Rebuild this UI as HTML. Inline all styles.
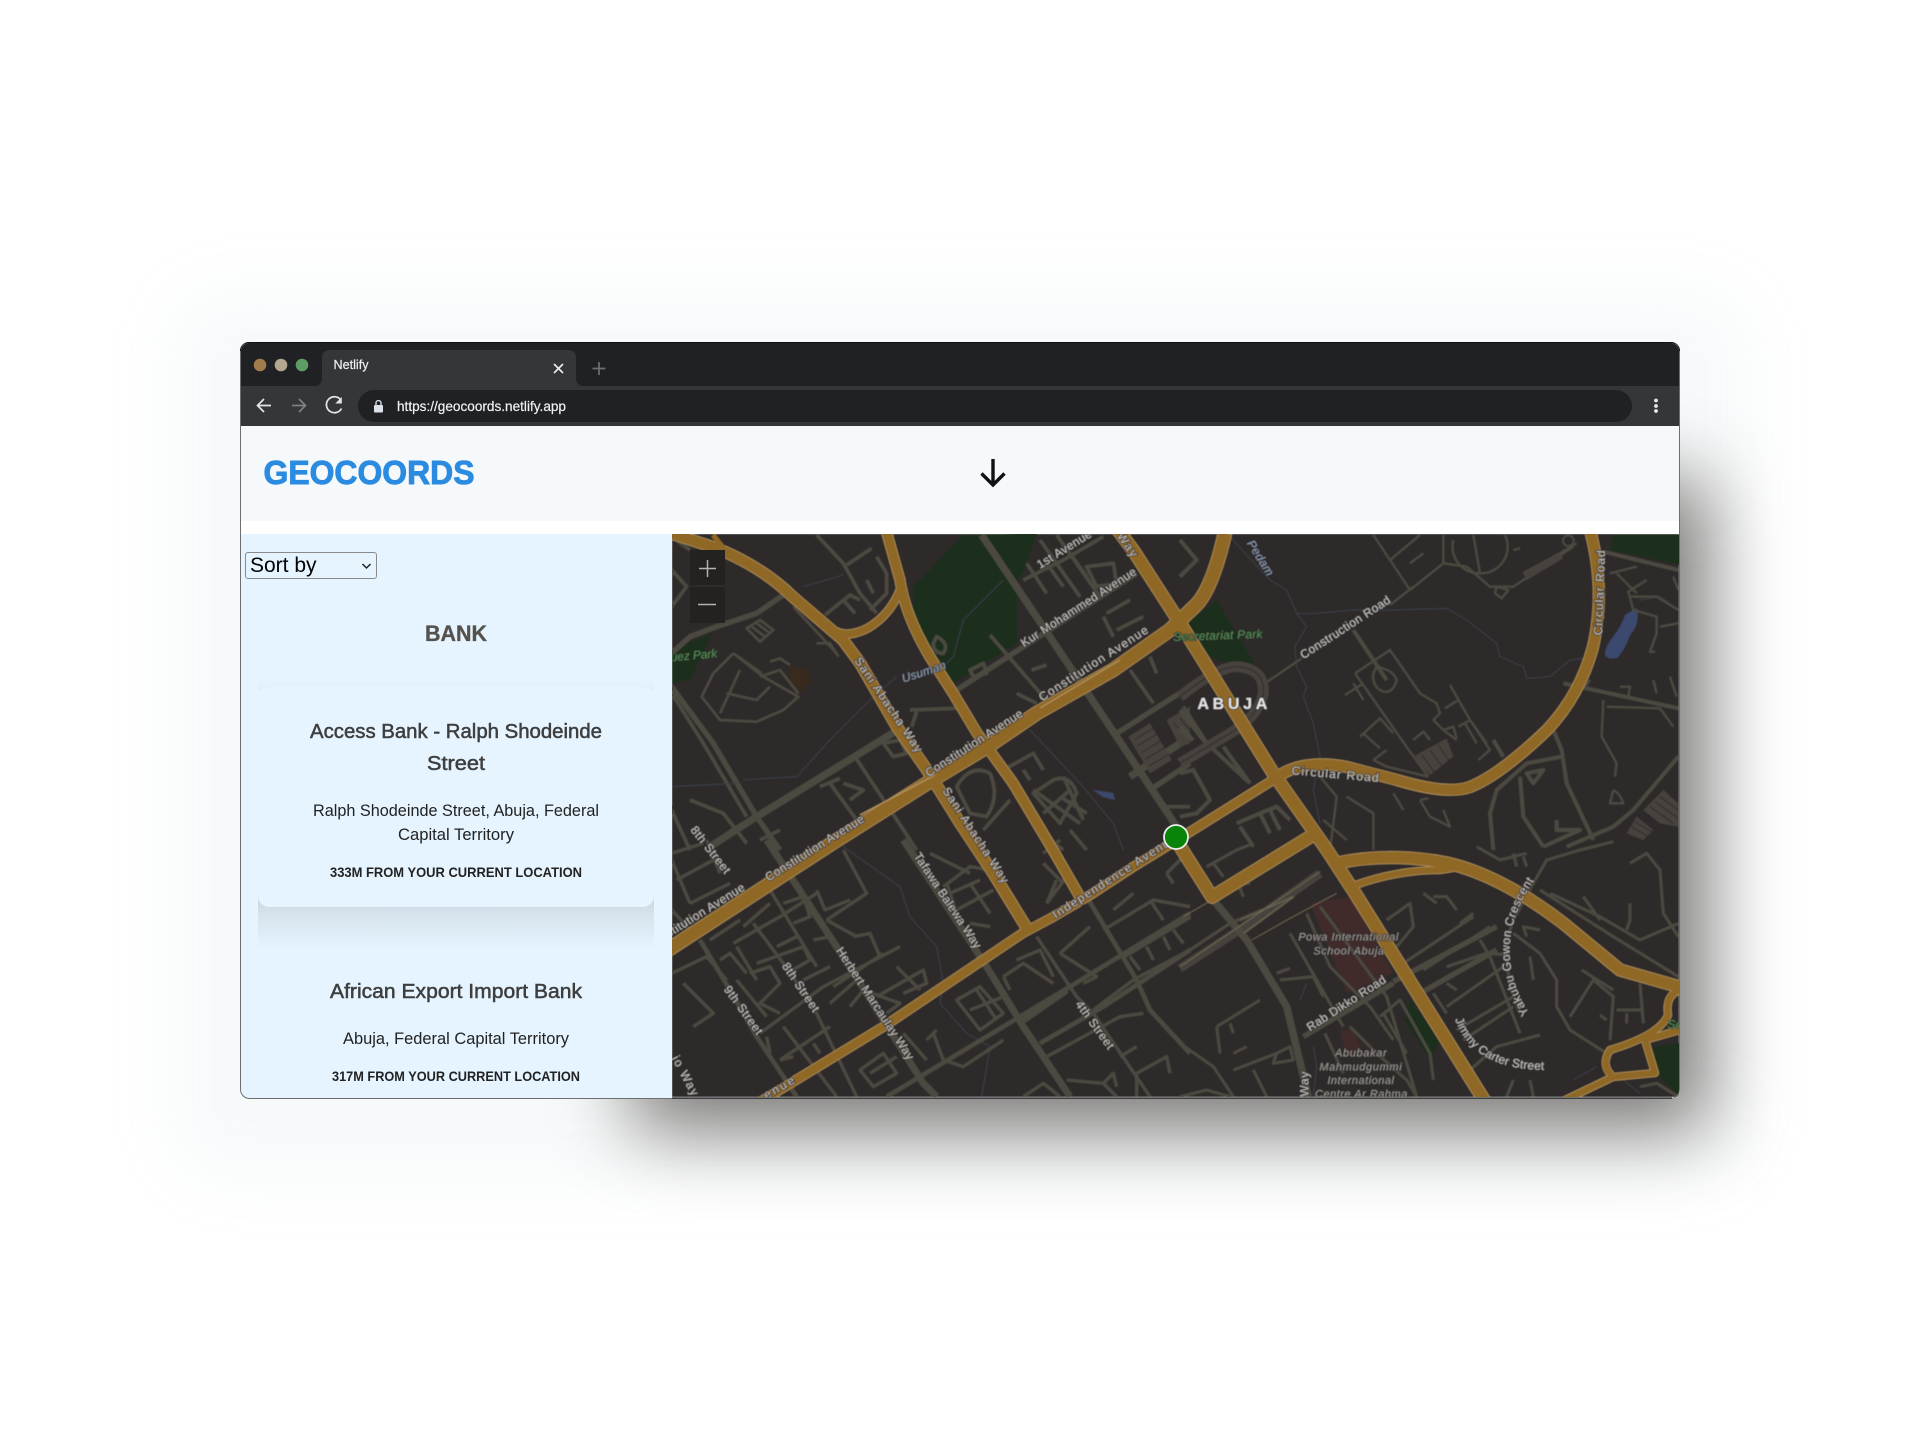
<!DOCTYPE html>
<html lang="en"><head><meta charset="utf-8"><title>Geocoords</title>
<style>
html,body{margin:0;padding:0;width:1920px;height:1440px;background:#fff;overflow:hidden;font-family:"Liberation Sans",sans-serif}
.sh{position:absolute}
svg{position:absolute;left:0;top:0}
select{position:absolute;left:245px;top:552px;width:132px;height:27px;font:21px "Liberation Sans",sans-serif;color:#000;background:#e5f4ff;border:1px solid #8a8a8a;border-radius:3px;padding:0 0 0 4px;margin:0;appearance:none;-webkit-appearance:none;outline:none}
.minor{fill:none;stroke:#4b4841;stroke-linecap:butt;stroke-linejoin:round}
.lb{font-family:"Liberation Sans",sans-serif;fill:#c4c2be;stroke:#2e2a29;stroke-width:5;paint-order:stroke;font-size:36px}
.it{font-style:italic;fill:#9a9793;stroke-width:4;font-size:33px}
.gr{font-style:italic;fill:#4f8f55;stroke-width:4}
.bl{font-style:italic;fill:#8c9db5;stroke-width:4}
</style></head><body>
<div class="sh" style="left:170px;top:290px;width:1580px;height:890px;border-radius:60px;background:rgba(150,185,210,.08);filter:blur(30px)"></div>
<div class="sh" style="left:632px;top:480px;width:1075px;height:650px;background:rgba(40,33,26,.6);filter:blur(38px)"></div>

<svg width="1920" height="1440" viewBox="0 0 1920 1440" xmlns="http://www.w3.org/2000/svg">
<defs>
<clipPath id="win"><rect x="240" y="342" width="1440" height="757" rx="9"/></clipPath>
<clipPath id="mapc"><rect x="672" y="534" width="1007" height="563"/></clipPath>
<path id="j1" d="M1047 520 Q925 322 1060 125"/>
<path id="j2" d="M825 538 Q880 690 1098 690"/>
<filter id="soft" x="0" y="0" width="100%" height="100%"><feGaussianBlur stdDeviation=".45"/></filter>
</defs>

<g clip-path="url(#win)">
<rect x="240" y="342" width="1440" height="757" fill="#f5f9fc"/>
<rect x="240" y="342" width="1440" height="44" fill="#202124"/>
<rect x="240" y="386" width="1440" height="40" fill="#35363a"/>
<rect x="240" y="426" width="1440" height="95" fill="#f5f9fc"/>
<rect x="240" y="521" width="1440" height="13" fill="#fff"/>
<rect x="240" y="534" width="432" height="565" fill="#e5f4ff"/>

<!-- Tab -->
<path d="M314 386 Q322 386 322 378 V358 Q322 350 330 350 H568 Q576 350 576 358 V378 Q576 386 584 386 Z" fill="#35363a"/>
<circle cx="260" cy="365" r="6.3" fill="#a07c4c"/>
<circle cx="281" cy="365" r="6.3" fill="#b3a78e"/>
<circle cx="302" cy="365" r="6.3" fill="#5d9c62"/>
<text x="333.5" y="369" font-size="13" fill="#f0f1f3" stroke="#f0f1f3" stroke-width=".2" textLength="35" lengthAdjust="spacingAndGlyphs">Netlify</text>
<path d="M554 364 L563 373 M563 364 L554 373" stroke="#eceded" stroke-width="1.6" fill="none"/>
<path d="M592.500 368.500 H605.500 M599 362 V375" stroke="#6f7072" stroke-width="1.7" fill="none"/>

<!-- Toolbar -->
<path d="M271 405.500 H258 M264 399 L257.500 405.500 L264 412" stroke="#e3e5e8" stroke-width="1.7" fill="none"/>
<path d="M292 405.500 H305 M299 399 L305.500 405.500 L299 412" stroke="#7f8082" stroke-width="1.7" fill="none"/>
<path d="M340.500 399.500 A8 8 0 1 0 341.500 408.500" stroke="#e3e5e8" stroke-width="1.7" fill="none"/>
<path d="M341.800 397 V403.500 H335.300 Z" fill="#e3e5e8"/>
<rect x="358" y="390" width="1274" height="32" rx="16" fill="#202124"/>
<rect x="374" y="405" width="9" height="7.500" rx="1" fill="#dde3ec"/>
<path d="M376 405.500 V403 A2.500 2.500 0 0 1 381 403 V405.500" stroke="#dde3ec" stroke-width="1.300" fill="none"/>
<text x="397" y="411" font-size="14" fill="#f0f1f3" stroke="#f0f1f3" stroke-width=".2" textLength="169" lengthAdjust="spacingAndGlyphs">https://geocoords.netlify.app</text>
<circle cx="1656" cy="400.500" r="1.900" fill="#e8eaed"/><circle cx="1656" cy="406" r="1.900" fill="#e8eaed"/><circle cx="1656" cy="411" r="1.900" fill="#e8eaed"/>

<!-- Header -->
<text x="263.500" y="484" font-size="33" font-weight="700" fill="#2b8be0" stroke="#2b8be0" stroke-width=".9" textLength="211" lengthAdjust="spacingAndGlyphs">GEOCOORDS</text>
<path d="M993 459 V485 M981.500 473.500 L993 485 L1004.500 473.500" stroke="#111" stroke-width="3.400" fill="none"/>

<!-- Sidebar cards -->
<defs><linearGradient id="cs" x1="0" y1="0" x2="0" y2="1"><stop offset="0" stop-color="#c8d5e0"/><stop offset=".35" stop-color="#d6e3ed"/><stop offset="1" stop-color="#e5f4ff"/></linearGradient>
<linearGradient id="ct" x1="0" y1="0" x2="0" y2="1"><stop offset="0" stop-color="#e5f4ff"/><stop offset="1" stop-color="#e0eff9"/></linearGradient></defs>
<rect x="258" y="678" width="396" height="12" fill="url(#ct)"/>
<rect x="258" y="895" width="396" height="55" fill="url(#cs)"/>
<rect x="258" y="687" width="396" height="220" rx="11" fill="#e5f4ff"/>

<text x="425" y="641" font-size="22" font-weight="700" fill="#55524e" stroke="#55524e" stroke-width=".3" textLength="62" lengthAdjust="spacingAndGlyphs">BANK</text>
<g font-size="20" fill="#3e3e3e" stroke="#3e3e3e" stroke-width=".5">
<text x="310" y="738" textLength="292" lengthAdjust="spacingAndGlyphs">Access Bank - Ralph Shodeinde</text>
<text x="427" y="770" textLength="58" lengthAdjust="spacingAndGlyphs">Street</text>
<text x="330" y="998" textLength="252" lengthAdjust="spacingAndGlyphs">African Export Import Bank</text>
</g>
<g font-size="17" fill="#222">
<text x="313" y="816" textLength="286" lengthAdjust="spacingAndGlyphs">Ralph Shodeinde Street, Abuja, Federal</text>
<text x="398" y="840" textLength="116" lengthAdjust="spacingAndGlyphs">Capital Territory</text>
<text x="343" y="1044" textLength="226" lengthAdjust="spacingAndGlyphs">Abuja, Federal Capital Territory</text>
</g>
<g font-size="14" font-weight="700" fill="#222">
<text x="330" y="877" textLength="252" lengthAdjust="spacingAndGlyphs">333M FROM YOUR CURRENT LOCATION</text>
<text x="332" y="1081" textLength="248" lengthAdjust="spacingAndGlyphs">317M FROM YOUR CURRENT LOCATION</text>
</g>

<!-- MAP -->
<g clip-path="url(#mapc)">
<g filter="url(#soft)">
<rect x="672" y="534" width="1007" height="563" fill="#2e2a29"/>
<!-- areas -->
<g fill="#1f2f1e">
<path d="M913 587 L963 535 L1037 533 L1023 573 L1017 580 L1017 643 L953 683 L930 657 L913 627Z"/>
<path d="M1187 623 L1217 600 L1260 673 L1223 662 L1195 650Z"/>
<path d="M672 683 L672 650 L713 633 L690 680Z"/>
<path d="M1613 535 L1680 535 L1680 565 L1610 550Z"/>
<path d="M1653 1047 L1680 1043 L1680 1097 L1657 1073Z"/>
<path d="M1410 1000 L1440 1040 L1430 1060 L1405 1020Z"/>
</g>
<g fill="#40292c">
<path d="M1310 903 L1350 897 L1393 973 L1347 993Z"/>
<path d="M1340 1030 L1353 1030 L1365 1056 L1345 1056Z"/>
</g>
<path d="M790 665 L806 670 L812 682 L800 692 L790 680Z" fill="#372b1b"/>
<g fill="#3b4a6e">
<path d="M1637 608 Q1640 625 1630 635 Q1625 650 1617 658 Q1605 660 1605 653 Q1606 645 1613 637 Q1622 625 1625 615Z"/>
<path d="M1093 790 L1113 793 L1115 800 L1103 797Z"/>
</g>

<!-- Crop 5 minors -->
<g transform="translate(670,530) scale(.33333)" class="minor">
<g stroke-width="11">
<path d="M440 15 L520 100 L570 190 L620 250M530 105 L605 55M620 80 L650 130 L650 190 L600 240M590 150 L610 190M465 255 L540 195 L570 210M520 210 L555 250M5 20 L60 60M5 120 L50 170 L5 230M5 490 L100 640 L230 860M1060 150 L1180 90 L1300 20M1070 100 L1130 190M1110 30 L1230 200M1160 15 L1290 200M1250 110 L1330 100 L1340 160 L1280 170ZM1300 260 L1330 320M960 315 L1120 500M1085 420 L1130 405M1040 490 L1100 520M1440 380 L1460 430M1380 420 L1450 520M1480 830 L1560 830M860 770 Q900 700 960 730 Q990 800 950 860 L900 850ZM1000 720 L1090 670 L1120 720M1060 720 L1080 750M940 900 L1020 810M1180 740 L1240 870M1150 750 Q1200 730 1220 790 L1170 880 L1090 790ZM1090 780 L1230 880M720 540 L860 535M740 545 L725 590M640 640 L690 630 L710 670 L670 680ZM555 680 L740 960M450 770 L510 745M520 760 L580 780 L540 810M480 760 L560 870M60 810 L160 850 L230 940M0 830 L60 960M330 900 L270 930M800 320 Q840 340 820 370 Q790 370 790 340Z M900 420 L940 400 L950 430 L910 440ZM1130 100 L1180 170M1200 70 L1250 140M1310 250 L1380 210M1340 300 L1420 260M1100 900 L1180 960M1200 900 L1250 960M1170 800 L1250 850M1120 850 L1200 780"/>
</g>
<path stroke-width="8" d="M190 370 L280 440 L385 500 L340 540 L260 575 L150 570 L95 500 L130 430 L190 370M210 420 L150 550M170 490 L260 510 L300 470M205 380 L275 430M300 395 L330 385 L360 405M270 440 L330 420 L385 490M230 295 L270 270 L310 300 L270 335ZM370 230 L500 370M440 340 L480 340 L505 380M245 290 L285 320M260 280 L300 310"/>
<path stroke-width="16" d="M340 195 L260 250 L140 290 L60 320 L5 370M5 470 L130 640 L260 860 L330 960M860 480 L1400 130M1340 610 L1560 470M1440 780 L1560 700"/>
<path stroke-width="22" d="M700 590 L260 860 L120 950M935 15 L1260 500 L1520 890M1380 740 L1560 620"/>
<g fill="#46433d" stroke="none"><path d="M1375 620 L1440 580 L1505 690 L1440 730Z M1490 570 L1560 530 L1560 640 L1530 650Z"/></g>
<path stroke="#2e2a29" stroke-width="3" d="M1392 630 L1450 595M1402 648 L1462 612M1414 668 L1474 632M1426 688 L1486 652M1438 708 L1498 672M1510 580 L1560 620M1530 565 L1560 600"/>
<path stroke="#3b4048" stroke-width="3" d="M400 170 L520 135M680 440 L600 510 L480 630 L380 740 L220 750 M1000 150 L880 270 L850 380 L830 400 M1080 600 L1230 760 L1330 880 L1360 960M5 770 L200 760"/>
</g>

<!-- Crop 6 minors -->
<g transform="translate(1180,530) scale(.33333)" class="minor">
<path stroke="#3b4048" stroke-width="3" d="M150 20 L270 150 L320 180 L350 250 L410 250 L520 240 L640 240 L800 235 L860 270 L950 340 L960 380 L1030 410 L1040 445 L1110 440 L1170 390 L1210 385M350 250 L380 290 L345 350 L350 410 L380 470 L370 500 L400 580 L420 680 L400 780 L420 880M1380 210 L1440 200 L1495 240"/>
<path stroke-width="7" d="M580 15 L690 180M630 90 L720 15M690 100 L730 70M790 15 L790 100 L690 180M820 30 A80 80 0 0 0 900 130 A80 80 0 0 0 975 15M880 15 L900 130M790 100 L860 110 L930 170 L1000 170 L1180 50M1030 130 L1140 70 L1190 40M950 170 L985 180 L965 205 L945 190ZM1000 60 L1020 55M255 460 L365 385M630 225 L700 170M525 430 L630 360 L720 490 L770 520 L780 550 L760 570 L790 600 L830 630M525 430 L690 665 L745 740M590 410 Q640 420 650 450 Q640 490 610 485 Q575 470 580 430ZM495 495 L550 460M520 460 L550 510M810 465 L870 570 L930 660 L895 690M795 535 L835 510M835 590 L870 570 L920 640M855 580 L890 640M540 620 L600 565 L640 610M550 610 L600 655M580 690 L620 660M580 690 L620 710 L745 740M700 630 L730 605 L750 630M790 600 L820 590 L830 625M420 740 L470 800 L450 960M430 870 L500 930M500 800 L580 850 L580 960M640 790 L670 840M720 810 L750 860 L810 890 L790 840M720 810 L745 805M1270 510 L1265 620 L1310 700 L1305 740M1210 480 L1230 450M1320 470 L1350 470 L1345 500M1420 450 L1430 490M1470 440 L1490 500M1280 530 L1440 535 L1480 590M1290 130 L1370 110M1310 130 L1370 190M1400 150 L1345 185 L1360 240 L1430 260 L1430 310 L1410 365 L1425 365M1350 200 L1430 200 L1495 240M1440 290 L1495 280M1480 140 L1495 180M1300 780 L1290 820 L1330 820 Q1320 790 1300 780"/>
<circle cx="1165" cy="32" r="16" stroke-width="6"/>
<path stroke-width="12" d="M520 300 L620 450M940 630 L970 680M1150 460 L1495 535M1270 65 L1495 120M1120 600 L1145 660 L1160 760 L1240 930M1145 680 L1040 700 L950 780 L930 850 L940 960M1020 740 L1030 860 L1090 950M1040 730 L1090 720 L1060 760ZM1090 950 L1200 900 L1130 900 L1130 870M1160 950 L1300 890 L1360 840 L1495 680M0 30 L50 90 L0 140M0 540 L70 630 L210 760M130 650 L210 760M10 530 L80 640M0 590 L30 620M0 730 L40 720 L90 810 L50 850 L0 860M0 600 L40 630M170 880 L240 850 L290 830 L330 870M180 890 L220 950M240 850 L270 910M270 840 L300 900"/>
<path stroke-width="32" stroke="#46433d" d="M0 500 Q100 420 160 410 Q255 410 250 490 Q235 560 150 610 L0 700"/>
<path stroke-width="3" stroke="#2e2a29" d="M0 500 Q100 420 160 410 Q255 410 250 490 Q235 560 150 610 L0 700"/>
<path fill="#46433d" stroke="none" d="M1390 840 L1450 780 L1495 820 L1495 890 L1440 880Z M1340 910 L1370 860 L1420 900 L1390 930Z M700 680 L800 625 L820 680 L750 735Z M1030 130 L1140 70 L1150 85 L1040 150Z"/>
<path stroke="#2e2a29" stroke-width="3" d="M1410 830 L1480 880M1425 815 L1495 865M1440 800 L1495 840M1355 890 L1405 920M1365 875 L1415 905M725 675 L770 735M750 660 L790 715M775 645 L810 695"/>
</g>

<!-- Crop 7 minors -->
<g transform="translate(670,840) scale(.33333)" class="minor">
<path stroke="#3b4048" stroke-width="3" d="M520 20 L690 140 L720 230 L800 320 L820 430 L810 490 L890 580 L960 620 L935 770"/>
<path stroke-width="10" d="M190 310 L330 230 L440 160M200 320 L260 420M250 250 L340 370 L430 500 L560 770M300 150 L440 380M150 360 L180 340 L230 400M240 400 L300 380 L330 430 L270 490 L330 520M260 370 L400 320 L420 360 L350 400M340 190 L400 170 L420 230 L370 250M430 300 L480 290M560 290 L470 240M470 240 L590 160 L520 30M440 150 L465 210 L540 180M550 290 L600 280 L630 350M680 380 L750 450M620 470 L760 390 L770 430 L700 460M540 500 L580 450 L690 490 L650 520M340 560 L500 770M330 660 L480 560M290 590 L300 640M430 610 L450 640M330 660 L370 650M570 690 L640 640 L680 700 L610 740ZM600 700 L680 650M700 580 L770 660M770 600 L800 570M790 580 L820 660 L880 680 L1000 600M780 40 L900 100M820 140 L900 80 L960 90M830 130 L860 220M840 160 L930 120M860 210 L970 150M900 250 L960 260M900 130 L960 220M860 480 L930 440 L1000 520 L930 570ZM920 450 L980 540M900 510 L1000 470M1000 410 L1060 370 L1150 430M1040 360 L1110 330 L1150 410M1020 450 L1000 410M1170 340 L1260 260M1170 340 L1280 410 L1240 430M1130 650 L1350 530 L1420 520M1350 650 L1400 620M1300 270 L1450 180 L1560 200M1330 210 L1390 160M1380 350 L1410 390M1430 320 L1450 360M1480 290 L1500 330M1510 270 L1540 310M1440 180 L1480 240M1130 190 L1190 110M1160 120 L1130 190M1180 130 L1120 70M1120 40 L1170 0M1490 100 L1540 50M1490 100 L1510 130M1400 770 L1400 700 L1490 650 L1500 700M1190 720 L1300 730 L1340 770M1060 770 L1120 730 L1170 770M1300 730 L1330 700 L1340 740M5 400 L110 350 L170 420M40 430 L130 520 L70 560M5 210 L70 280M110 0 L150 100M5 40 L100 10M5 60 L60 190M270 580 L460 440 L690 320M490 440 L640 340M20 120 L130 60M60 190 L180 130M220 260 L300 190M320 320 L380 290M400 420 L480 380M480 490 L560 420M200 420 L290 530M120 300 L210 240"/>
<path stroke-width="14" d="M90 300 L180 450 L260 590 L380 770M650 770 L1200 440 L1560 220M1110 610 L1300 500 L1560 330M1250 170 L1400 420 L1440 510 L1560 640M1360 350 L1560 230"/>
<path stroke-width="10" d="M1100 290 L1220 470 L1270 520 L1440 770M1270 510 L1390 420 L1560 330"/>
<path stroke-width="21" d="M290 0 L500 320 L760 730 L800 770M700 0 L950 380 L1060 560 L1200 770M1060 540 L1190 450"/>
</g>

<!-- Crop 8 minors -->
<g transform="translate(1180,840) scale(.33333)" class="minor">
<path stroke="#3b4048" stroke-width="3" d="M360 480 L380 430 M400 620 L410 680 L400 770M1180 720 L1250 680M1330 720 L1380 760"/>
<path stroke-width="26" stroke="#46433d" d="M0 385 L170 275 L420 100"/>
<path stroke-width="9" d="M0 350 L150 250 L340 170M180 240 L340 170 L190 280M80 80 L170 30 L220 10M100 70 L130 110M140 130 L210 130M170 120 L190 170M420 200 L620 470 L710 770M380 220 L450 380 L570 500 L640 600M330 280 L450 490 L490 560M300 420 L400 410 L430 470M290 400 L330 385M620 240 L690 190 L700 260 L650 320M670 370 L880 230M830 210 L800 170 L760 170M840 250 L880 220M730 390 L930 260M900 300 L930 350 L1020 580M800 380 L920 340 L990 345M800 500 L970 380M830 570 L1000 470M850 600 L1000 500M760 460 L800 520M800 430 L830 450M600 530 L660 480 L750 640 L760 720M870 690 L950 620 L1080 585M1060 130 L1000 240 L975 320 L990 440 L1020 520M1000 280 L1080 340 L1130 420 L1130 500 L1170 570 L1280 640M1040 290 L1030 260 L1080 270M1050 350 L1060 420M1170 530 L1240 420 L1300 470 L1290 600M1205 390 L1300 450M1260 525 L1280 540M1310 510 L1390 510M1340 520 L1340 550M1380 430 L1390 550M1110 160 L1260 230 L1380 300 L1495 250M1210 170 L1260 240M1350 190 L1350 240 L1340 270M1350 70 L1400 40 L1440 90 L1450 220 L1495 290M1060 130 L1100 60 L1200 30 L1300 5M1080 150 L1300 290 L1495 410M0 610 L100 680 L160 770M110 560 L240 480M110 560 L120 640M150 550 L160 580M160 640 L200 620M290 640 L330 620 L340 660 L280 670ZM160 690 L290 640M220 690 L260 770M0 770 L80 750 L150 770M510 560 L590 640 L680 720 L710 770M610 520 L680 640M435 580 L490 700M1000 720 L980 770M1050 720 L1060 770M1380 740 L1430 730 L1495 770M890 20 L960 60 L1040 40M1000 40 L1010 80M1030 50 L1040 80M730 160 L770 190"/>
<path stroke-width="16" d="M370 590 L640 430M720 460 L950 330M640 425 L950 260"/>
<path stroke-width="22" d="M100 180 L200 300 L320 500 L385 770"/>
<path stroke-width="2" stroke="#7d7358" d="M180 240 L340 170M190 280 L340 170M215 300 L330 235 L470 160M10 230 L130 160M0 380 L170 265 L420 95"/>
</g>

<!-- major casing + fill -->
<g fill="none" stroke-linejoin="round" stroke-linecap="butt">
<g stroke="#b2945f">
<path stroke-width="12" d="M660 530 L713 547 Q760 565 793 597 L843 640 L860 663 L897 727 L927 770 L960 823 L993 873 L1028 930"/>
<path stroke-width="11" d="M886 530 L900 580 Q905 615 930 657 L953 693 L977 733 L1013 783 L1053 850 L1080 897"/>
<path stroke-width="9" d="M900 590 Q890 615 868 628 Q845 640 830 628"/>
<path stroke-width="14.500" d="M660 955 L837 840 L937 777 L987 747 L1037 713 L1113 670 L1170 630 L1195 606 Q1212 590 1225 533"/>
<path stroke-width="10" d="M755 1105 L883 1027 L1023 933 L1053 917 L1087 897 L1133 867 L1177 840 L1273 780"/>
<path stroke-width="12" d="M1273 780 Q1300 758 1347 767 L1397 780 Q1447 795 1470 787 Q1500 775 1547 730 Q1580 695 1593 647 Q1606 590 1590 530"/>
<path stroke-width="13.500" d="M1118 530 L1133 550 L1180 623 L1273 773 L1327 850 L1353 890 L1484 1100"/>
<path stroke-width="13.500" d="M1176 840 L1212 897 L1313 835"/>
<path stroke-width="13" d="M1337 863 Q1390 852 1447 863 Q1500 875 1563 923 L1620 970 L1680 987"/>
<path stroke-width="8" d="M1350 887 Q1395 870 1440 870 L1453 868"/>
<path stroke-width="8" d="M1680 990 Q1665 995 1668 1015 Q1660 1035 1610 1050 Q1600 1065 1613 1077 L1565 1100M1645 1040 L1655 1073 L1613 1077M1680 1030 L1645 1040"/>
</g>
<g stroke="#8f6727">
<path stroke-width="10.500" d="M660 530 L713 547 Q760 565 793 597 L843 640 L860 663 L897 727 L927 770 L960 823 L993 873 L1028 930"/>
<path stroke-width="9.500" d="M886 530 L900 580 Q905 615 930 657 L953 693 L977 733 L1013 783 L1053 850 L1080 897"/>
<path stroke-width="7.500" d="M900 590 Q890 615 868 628 Q845 640 830 628"/>
<path stroke-width="13" d="M660 955 L837 840 L937 777 L987 747 L1037 713 L1113 670 L1170 630 L1195 606 Q1212 590 1225 533"/>
<path stroke-width="8.500" d="M755 1105 L883 1027 L1023 933 L1053 917 L1087 897 L1133 867 L1177 840 L1273 780"/>
<path stroke-width="10.500" d="M1273 780 Q1300 758 1347 767 L1397 780 Q1447 795 1470 787 Q1500 775 1547 730 Q1580 695 1593 647 Q1606 590 1590 530"/>
<path stroke-width="12" d="M1118 530 L1133 550 L1180 623 L1273 773 L1327 850 L1353 890 L1484 1100"/>
<path stroke-width="12" d="M1176 840 L1212 897 L1313 835"/>
<path stroke-width="11.500" d="M1337 863 Q1390 852 1447 863 Q1500 875 1563 923 L1620 970 L1680 987"/>
<path stroke-width="6.500" d="M1350 887 Q1395 870 1440 870 L1453 868"/>
<path stroke-width="6.500" d="M1680 990 Q1665 995 1668 1015 Q1660 1035 1610 1050 Q1600 1065 1613 1077 L1565 1100M1645 1040 L1655 1073 L1613 1077M1680 1030 L1645 1040"/>
<path stroke-width="5" d="M713 535 L725 550"/>
</g>
<path stroke="#b2945f" stroke-width="1.300" d="M860 815 L935 775M1040 708 L1120 660"/>
</g>

<!-- labels crop 5 -->
<g transform="translate(670,530) scale(.33333)">
<text class="lb" transform="translate(552,392) rotate(56)" textLength="335">Sani Abacha Way</text>
<text class="lb bl" transform="translate(700,458) rotate(-18)" textLength="137">Usuman</text>
<text class="lb" transform="translate(1062,352) rotate(-33)" textLength="405">Kur Mohammed Avenue</text>
<text class="lb" transform="translate(1110,117) rotate(-32)" textLength="186">1st Avenue</text>
<text class="lb" transform="translate(776,742) rotate(-33)" textLength="340">Constitution Avenue</text>
<text class="lb" transform="translate(1116,515) rotate(-33)" textLength="383">Constitution Avenue</text>
<text class="lb" transform="translate(816,782) rotate(57)" textLength="334">Sani Abacha Way</text>
<text class="lb" transform="translate(1340,18) rotate(55)" textLength="80">Way</text>
<text class="lb gr" transform="translate(3,394) rotate(-5)" textLength="140">uez Park</text>
<text class="lb" transform="translate(60,900) rotate(52)" textLength="170">8th Street</text>
<text class="lb" transform="translate(295,1055) rotate(-32)" textLength="342">Constitution Avenue</text>
</g>
<!-- labels crop 6 -->
<g transform="translate(1180,530) scale(.33333)">
<text class="lb bl" transform="translate(200,40) rotate(58)" textLength="118">Pedam</text>
<text class="lb gr" transform="translate(-20,333) rotate(-2)" textLength="268">Secretariat Park</text>
<text class="lb" transform="translate(370,388) rotate(-33)" textLength="315">Construction Road</text>
<text class="lb" x="52" y="537" textLength="210" style="font-size:48px;font-weight:700;fill:#e6e6e6">ABUJA</text>
<text class="lb" transform="translate(334,733) rotate(5)" textLength="262">Circular Road</text>
<text class="lb" transform="translate(1266,316) rotate(-88)" textLength="255">Circular Road</text>
</g>
<!-- labels crop 7 -->
<g transform="translate(670,840) scale(.33333)">
<text class="lb" transform="translate(730,48) rotate(56.500)" textLength="336">Tafawa Balewa Way</text>
<text class="lb" transform="translate(497,332) rotate(56.700)" textLength="395">Herbert Marcaulay Way</text>
<text class="lb" transform="translate(335,378) rotate(56)" textLength="170">8th Street</text>
<text class="lb" transform="translate(160,448) rotate(54)" textLength="172">9th Street</text>
<text class="lb" transform="translate(1215,493) rotate(54)" textLength="170">4th Street</text>
<text class="lb" transform="translate(1157,237) rotate(-32.800)" textLength="434">Independence Avenue</text>
<text class="lb" transform="translate(290,778) rotate(-30)" textLength="100">enue</text>
<text class="lb" transform="translate(5,655) rotate(62)" textLength="130">jo Way</text>
<text class="lb" transform="translate(-63,330) rotate(-32)" textLength="342">Constitution Avenue</text>
</g>
<!-- labels crop 8 -->
<g transform="translate(1180,840) scale(.33333)">
<text class="lb it" x="355" y="302" textLength="300">Powa International</text>
<text class="lb it" x="400" y="343" textLength="212">School Abuja</text>
<text class="lb" transform="translate(390,575) rotate(-33)" textLength="275">Rab Dikko Road</text>
<text class="lb"><textPath href="#j1" textLength="425">Yakubu Gowon Crescent</textPath></text>
<text class="lb"><textPath href="#j2" textLength="330">Jimmy Carter Street</textPath></text>
<text class="lb" transform="translate(386,770) rotate(-90)" textLength="75">Way</text>
<text class="lb it" x="465" y="650" textLength="155">Abubakar</text>
<text class="lb it" x="418" y="691" textLength="247">Mahmudgummi</text>
<text class="lb it" x="442" y="732" textLength="200">International</text>
<text class="lb it" x="405" y="772" textLength="277">Centre Ar Rahma</text>
<text class="lb gr" x="1462" y="566" textLength="45">Se</text>
</g>
</g>

<!-- zoom controls -->
<rect x="690" y="550" width="35" height="35" fill="#232221"/>
<rect x="690" y="587" width="35" height="36" fill="#232221"/>
<path d="M699 568.500 H716 M707.500 560 V577 M698 604.500 H716" stroke="#b5b3b0" stroke-width="1.500" fill="none"/>
<!-- marker -->
<circle cx="1176" cy="837" r="12" fill="#088408" stroke="#e8ecea" stroke-width="1.800"/>
</g>
<rect x="240.500" y="342.500" width="1439" height="756" rx="9" fill="none" stroke="#6e6e6e" stroke-width="1"/>
<path d="M240.500 351 Q240.500 342.500 249 342.500 H1671 Q1679.500 342.500 1679.500 351" fill="none" stroke="#111" stroke-width="1"/>
<path d="M672 1098 H1672" stroke="#222" stroke-width="1.200"/>
</g>
</svg>
<select><option>Sort by</option></select>
<svg width="1920" height="1440" viewBox="0 0 1920 1440" style="pointer-events:none"><path d="M362.500 564 L366.500 568 L370.500 564" stroke="#222" stroke-width="1.500" fill="none"/></svg>
</body></html>
